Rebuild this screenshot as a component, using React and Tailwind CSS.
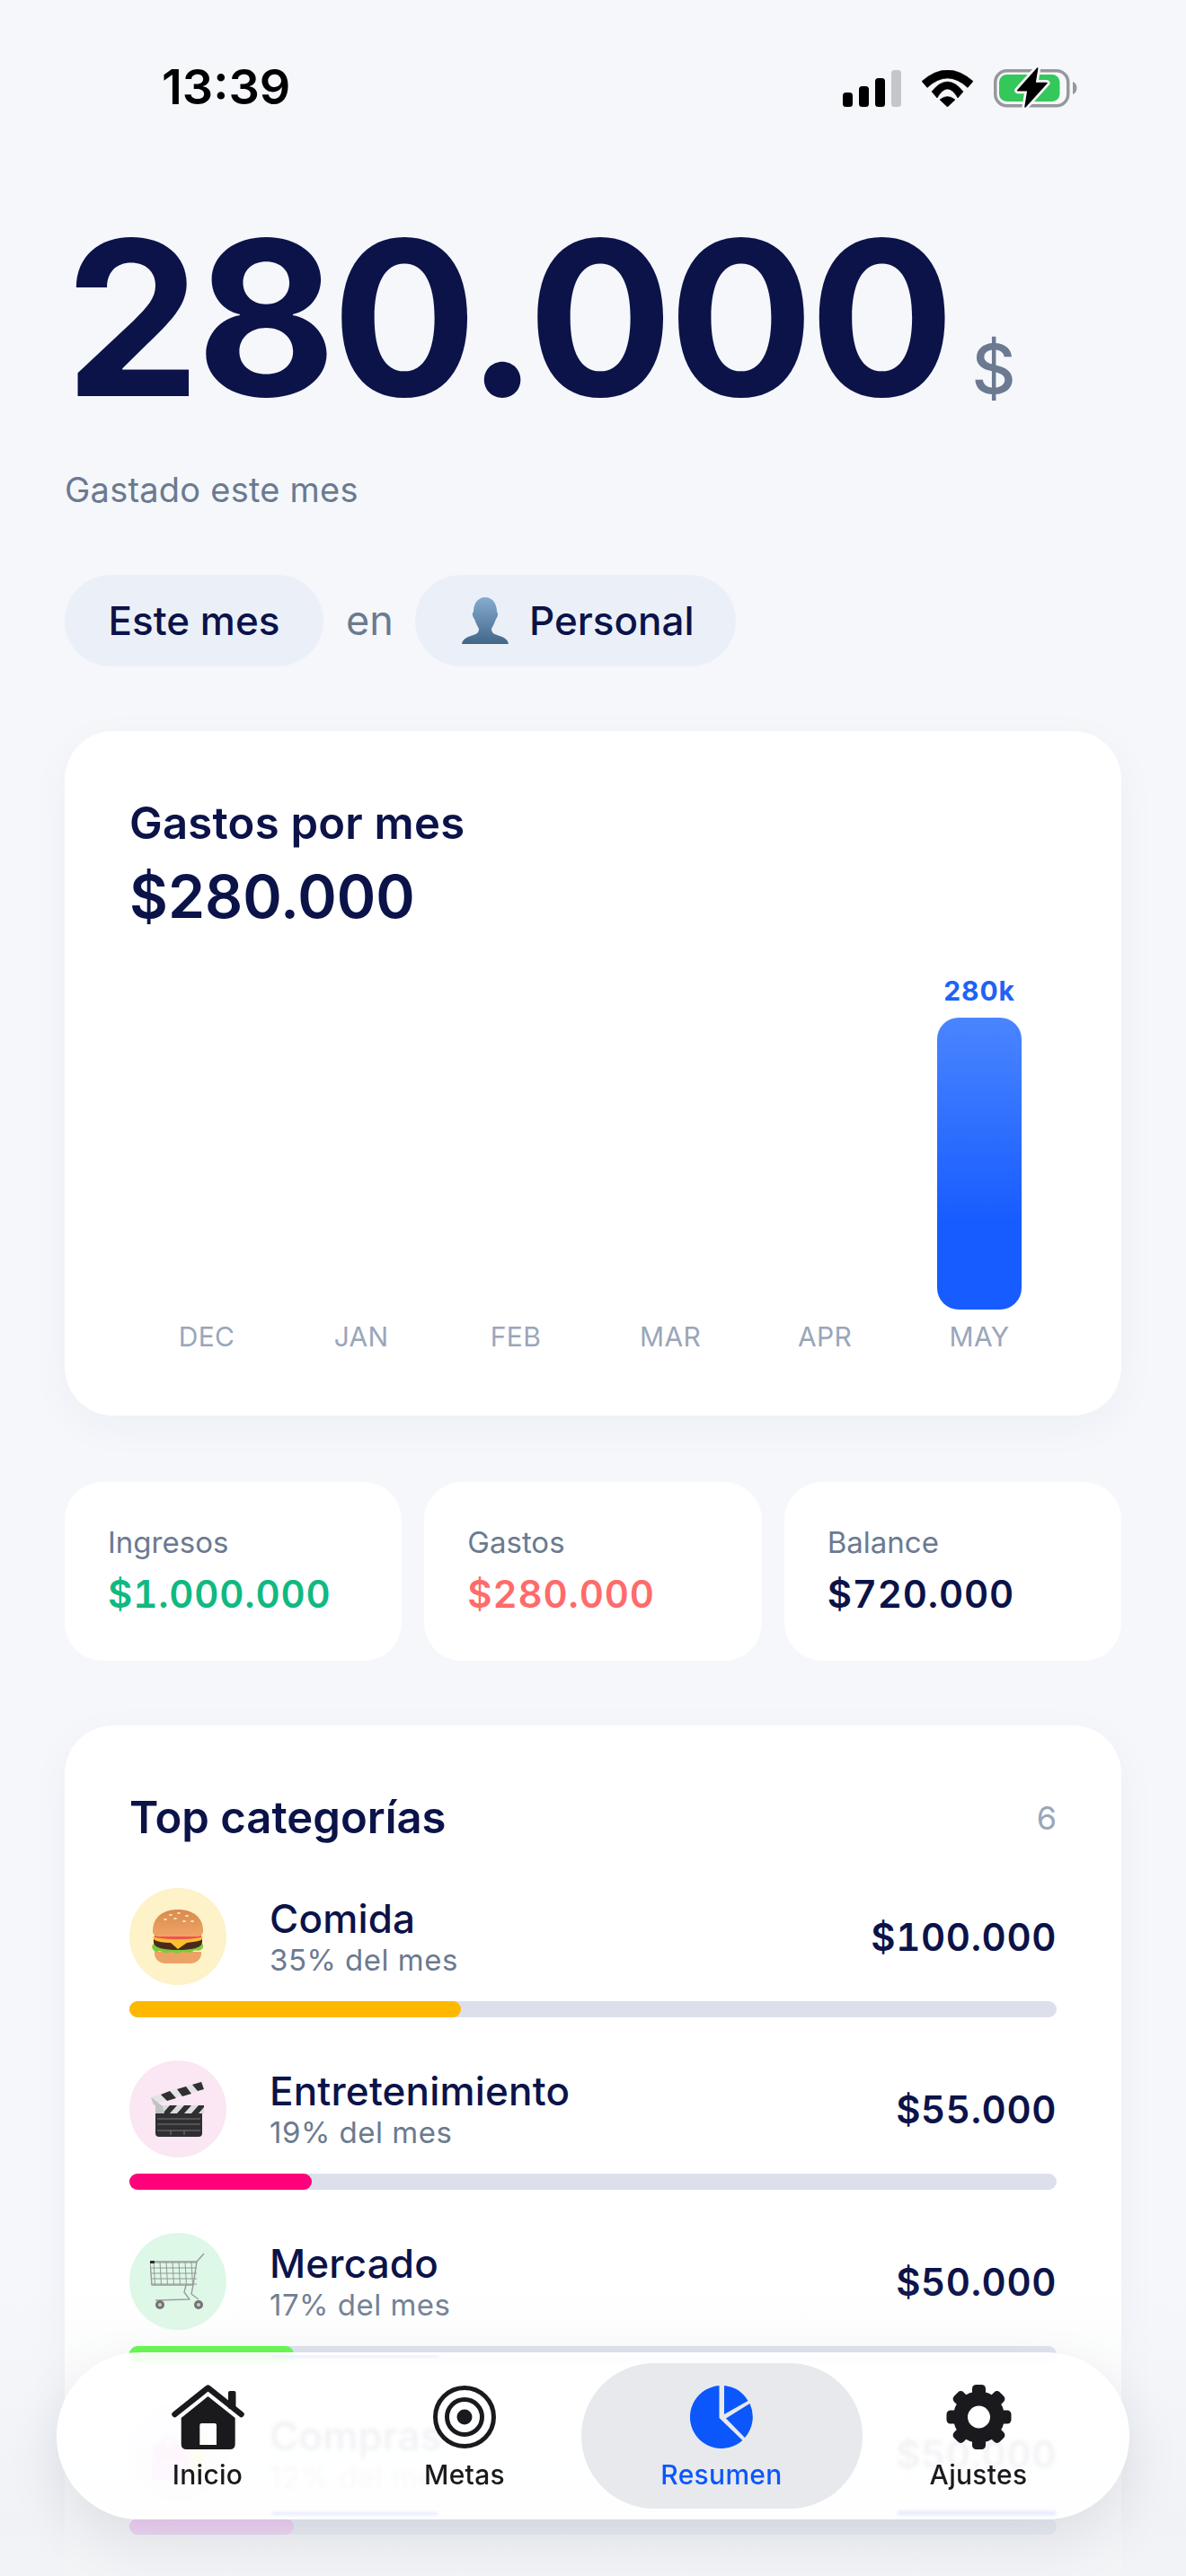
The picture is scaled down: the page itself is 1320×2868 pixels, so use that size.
import React from "react";

const navy = "text-[#0b1349]";

function Signal() {
  return (
    <svg width="65" height="41" viewBox="0 0 65 41">
      <rect x="0" y="25" width="11" height="16" rx="3.5" fill="#000" />
      <rect x="18" y="18" width="11" height="23" rx="3.5" fill="#000" />
      <rect x="36" y="9" width="11" height="32" rx="3.5" fill="#000" />
      <rect x="54" y="0" width="11" height="41" rx="3.5" fill="#c5c6cb" />
    </svg>
  );
}

function Wifi() {
  return (
    <svg width="57" height="41" viewBox="0 0 57 41">
      <path d="M0 12.5 Q28.5 -12.5 57 12.5 L51 19.5 Q28.5 -1.5 6 19.5 Z" fill="#000" stroke="#000" strokeWidth="0.6" strokeLinejoin="round" />
      <path d="M11 24 Q28.5 2 46 24 L40 31 Q28.5 11 17 31 Z" fill="#000" stroke="#000" strokeWidth="0.6" strokeLinejoin="round" />
      <path d="M20 33 Q28.5 26 37 33 L28.5 41 Z" fill="#000" stroke="#000" strokeWidth="0.6" strokeLinejoin="round" />
    </svg>
  );
}

function Battery() {
  const bolt = "M48.7 1 L26.7 25.7 L38 25.7 L35 44 L59 17.5 L46 17.5 Z";
  return (
    <svg width="93" height="46" viewBox="0 0 93 46">
      <rect x="1.75" y="3.75" width="81" height="39" rx="13" fill="none" stroke="#98989c" strokeWidth="3.5" />
      <rect x="6" y="8" width="67.5" height="30" rx="8.5" fill="#34c759" />
      <path d="M88 16 C91 17 92.5 20 92.5 23 C92.5 26 91 29 88 30 Z" fill="#98989c" />
      <path d={bolt} fill="#f5f7fb" stroke="#f5f7fb" strokeWidth="7" strokeLinejoin="round" />
      <path d={bolt} fill="#000" stroke="#000" strokeWidth="1.5" strokeLinejoin="round" />
    </svg>
  );
}

function Bust() {
  return (
    <svg width="52" height="52" viewBox="0 0 52 52">
      <defs>
        <linearGradient id="bust" x1="0" y1="0" x2="0" y2="1">
          <stop offset="0" stopColor="#84add0" />
          <stop offset="1" stopColor="#436688" />
        </linearGradient>
      </defs>
      <path d="M26 0 C35 0 39 8 39 16 C41 18 40 22 38 24 C36 30 34 33 33 35 C33 40 36 41 42 43 C48 45 51 47 52 52 L0 52 C1 47 4 45 10 43 C16 41 19 40 19 35 C18 33 16 30 14 24 C12 22 11 18 13 16 C13 8 17 0 26 0 Z" fill="url(#bust)" />
    </svg>
  );
}

function Burger() {
  return (
    <svg width="60" height="60" viewBox="0 0 60 60">
      <defs>
        <linearGradient id="bun" x1="0" y1="0" x2="0" y2="1">
          <stop offset="0" stopColor="#d98a4e" />
          <stop offset="1" stopColor="#efa566" />
        </linearGradient>
      </defs>
      <path d="M4 47 C3 54 9 60 16 60 L44 60 C51 60 57 54 56 47 Z" fill="#eda265" />
      <path d="M2 39 C10 34 50 34 58 39 L58 42 C54 49 50 43 46 47 C42 50 38 45 33 48 C28 51 24 45 19 48 C14 50 11 44 7 47 C4 48 2 44 1 42 Z" fill="#7ccb3a" />
      <path d="M3 36 C2 28 8 29 30 29 C52 29 58 28 57 36 C57 43 45 45 30 45 C15 45 3 43 3 36 Z" fill="#4b2a1c" />
      <path d="M2 30 L58 30 L56 34 C50 36 44 36 40 37 L30 44 L22 37 C14 37 8 36 4 34 Z" fill="#fbc02d" />
      <path d="M4 28 L56 28 L56 31 C40 34 20 34 4 31 Z" fill="#ef5350" />
      <path d="M2 24 C2 8 14 0 30 0 C46 0 58 8 58 24 C58 29 54 30 50 30 L10 30 C6 30 2 29 2 24 Z" fill="url(#bun)" />
      <g fill="#f8e4c6">
        <ellipse cx="22" cy="6" rx="2" ry="1" />
        <ellipse cx="31" cy="4" rx="2" ry="1" />
        <ellipse cx="40" cy="7" rx="2" ry="1" />
        <ellipse cx="27" cy="10" rx="2" ry="1" />
        <ellipse cx="37" cy="13" rx="2" ry="1" />
        <ellipse cx="16" cy="11" rx="2" ry="1" />
        <ellipse cx="46" cy="13" rx="2" ry="1" />
      </g>
    </svg>
  );
}

function Clapper() {
  return (
    <svg width="62" height="62" viewBox="0 0 62 62">
      <rect x="6" y="27" width="52" height="35" rx="4" fill="#2f2f31" />
      <g stroke="#8c8c8e" strokeWidth="0.8">
        <line x1="8" y1="42" x2="56" y2="42" />
        <line x1="8" y1="48" x2="56" y2="48" />
        <line x1="8" y1="55" x2="56" y2="55" />
        <line x1="23" y1="55" x2="23" y2="60" />
        <line x1="38" y1="55" x2="38" y2="60" />
      </g>
      <rect x="6" y="27" width="54" height="9" fill="#dcdcdc" />
      <path d="M14 36 L22 27 L30 27 L22 36 Z M30 36 L38 27 L46 27 L38 36 Z M46 36 L54 27 L60 27 L60 29 L54 36 Z" fill="#303032" />
      <path d="M1 18 L58 0 L60 9 L4 26 Z" fill="#e3e3e3" />
      <path d="M12 15 L22 11 L29 19 L19 22 Z M30 9 L40 6 L46 14 L36 17 Z M47 4 L57 1 L60 9 L53 11 Z" fill="#303032" />
      <path d="M1 18 L4 26 L6 27 L6 36 L16 36 L14 28 Z" fill="#bfc1c3" />
    </svg>
  );
}

function Cart() {
  const verts = [4, 11, 18, 25, 32, 39, 46];
  const hors = [11, 17, 23, 29, 35];
  return (
    <svg width="62" height="64" viewBox="0 0 62 64" fill="none">
      <g stroke="#8e8e90" strokeWidth="0.9">
        {verts.map((x) => (
          <line key={x} x1={x} y1="10" x2={x + 1.5} y2="36" />
        ))}
        {hors.map((y) => (
          <line key={y} x1="1" y1={y} x2="52" y2={y} />
        ))}
      </g>
      <path d="M0 10 L52 10 L60 1 M52 10 L48 36 L2 36 L0 10 M40 36 L38 44 L44 52 L6 53 M48 36 L46 46 L54 52" stroke="#9a9a9c" strokeWidth="1.4" strokeLinejoin="round" />
      <rect x="0" y="9" width="5" height="3" fill="#2b2b2d" />
      <circle cx="11" cy="58" r="5" fill="#6b6b6d" />
      <circle cx="11" cy="58" r="2" fill="#c9c9cb" />
      <circle cx="54" cy="58" r="5" fill="#6b6b6d" />
      <circle cx="54" cy="58" r="2" fill="#c9c9cb" />
    </svg>
  );
}

function Bags() {
  return (
    <svg width="64" height="64" viewBox="0 0 64 64" fill="none">
      <path d="M38 10 L60 10 L62 58 L38 58 Z" fill="#ffc400" />
      <path d="M4 22 L44 22 L46 62 L2 62 Z" fill="#ff5fd2" />
      <path d="M14 26 C14 8 32 8 32 26" stroke="#c63fa6" strokeWidth="2.5" />
    </svg>
  );
}

function HomeIcon() {
  return (
    <svg width="81" height="72" viewBox="0 0 81 72">
      <path d="M3.5 33 L40.5 3.5 L77.5 33" fill="none" stroke="#1a1a1e" strokeWidth="6.5" strokeLinecap="round" strokeLinejoin="round" />
      <rect x="63" y="7" width="8.5" height="20" rx="2" fill="#1a1a1e" />
      <path
        fillRule="evenodd"
        d="M40.5 13 L70.7 37 L70.7 66 Q70.7 72 64.7 72 L16.7 72 Q10.7 72 10.7 66 L10.7 37 Z M33.3 43 Q31.3 43 31.3 45 L31.3 67 L50 67 L50 45 Q50 43 48 43 Z"
        fill="#1a1a1e"
      />
    </svg>
  );
}

function TargetIcon() {
  return (
    <svg width="70" height="70" viewBox="0 0 70 70" fill="none">
      <circle cx="35" cy="35" r="32.5" stroke="#1a1a1e" strokeWidth="5" />
      <circle cx="35" cy="35" r="19.5" stroke="#1a1a1e" strokeWidth="5" />
      <circle cx="35" cy="35" r="8.5" fill="#1a1a1e" />
    </svg>
  );
}

function PieIcon() {
  return (
    <svg width="70" height="70" viewBox="0 0 70 70" fill="#0b57fb">
      <path d="M32.5 0.1 A35 35 0 1 0 58.4 61 L32.5 36 Z" />
      <path d="M38 0.1 A35 35 0 0 1 64.5 17 L38 32 Z" />
      <path d="M66.5 20 A35 35 0 0 1 61 58 L40 36.5 Z" />
    </svg>
  );
}

function GearIcon() {
  const teeth = [0, 45, 90, 135, 180, 225, 270, 315];
  return (
    <svg width="73" height="72" viewBox="0 0 73 72" fill="#1a1a1e">
      {teeth.map((a) => (
        <rect key={a} x="29" y="0" width="15" height="20" rx="4.5" transform={`rotate(${a} 36.5 36)`} />
      ))}
      <circle cx="36.5" cy="36" r="20.5" fill="none" stroke="#1a1a1e" strokeWidth="16" />
    </svg>
  );
}

const months = ["DEC", "JAN", "FEB", "MAR", "APR"];

const rows = [
  { name: "Comida", sub: "35% del mes", amount: "$100.000", circle: "bg-[#fdf2c8]", bar: "bg-[#ffb800]", w: "w-[369px]", icon: <Burger /> },
  { name: "Entretenimiento", sub: "19% del mes", amount: "$55.000", circle: "bg-[#fbe6f3]", bar: "bg-[#ff007a]", w: "w-[203px]", icon: <Clapper /> },
  { name: "Mercado", sub: "17% del mes", amount: "$50.000", circle: "bg-[#ddf8e6]", bar: "bg-[#48fb2b]", w: "w-[183px]", icon: <Cart /> },
  { name: "Compras", sub: "12% del mes", amount: "$50.000", circle: "bg-[#fbe0fa]", bar: "bg-[#ee8cf0]", w: "w-[183px]", icon: <Bags /> },
];

function Mini({ label, value, color }) {
  return (
    <div className="h-[199px] rounded-[42px] bg-white pl-[48px] pt-[47px]">
      <div className="text-[33px] leading-[40px] text-[#6b7a90]">{label}</div>
      <div className={`mt-[12px] text-[42px] leading-[52px] font-semibold tabular-nums tracking-[0.02em] ${color}`}>{value}</div>
    </div>
  );
}

function NavItem({ icon, label, active }) {
  return (
    <div className="relative flex h-[162px] flex-col items-center pt-[24px]">
      {active && <div className="absolute -inset-x-[13.5px] inset-y-0 rounded-full bg-[#e7e9ed]" />}
      <div className="relative flex h-[72px] items-center justify-center">{icon}</div>
      <div className={`relative mt-[8px] text-[30px] leading-[40px] font-medium tracking-[0.01em] ${active ? "text-[#0b57fb]" : "text-[#1a1a1e]"}`}>{label}</div>
    </div>
  );
}

export default function App() {
  return (
    <div className="relative h-[2868px] w-[1320px] overflow-hidden bg-[#f5f7fb] [font-family:Inter,sans-serif]">
      {/* status bar */}
      <div className="flex h-[234px] items-start justify-between pl-[180px] pr-[121px] pt-[75px]">
        <div className="text-[54px] leading-[44px] font-semibold text-black">13:39</div>
        <div className="flex items-center gap-[23px]">
          <Signal />
          <Wifi />
          <Battery />
        </div>
      </div>

      <div className="px-[72px]">
        {/* hero */}
        <div className={`flex h-[240px] items-baseline leading-[240px] ${navy}`}>
          <span className="text-[240px] font-bold tracking-[-0.021em]">280.000</span>
          <span className="ml-[24px] -translate-y-[3px] text-[76px] font-medium text-[#6b7a90]">$</span>
        </div>
        <div className="mt-[49px] text-[38px] leading-[44px] tracking-[0.006em] text-[#6b7a90]">Gastado este mes</div>

        {/* chips */}
        <div className="mt-[73px] flex items-center">
          <div className={`flex h-[102px] w-[288px] items-center justify-center rounded-full bg-[#ebf0f8] text-[44px] font-medium ${navy}`}>Este mes</div>
          <div className="ml-[25px] w-[52px] text-[45px] text-[#6b7a90]">en</div>
          <div className={`ml-[25px] flex h-[102px] w-[357px] items-center gap-[23px] rounded-full bg-[#ebf0f8] pl-[52px] text-[44px] font-medium ${navy}`}>
            <Bust />
            <span>Personal</span>
          </div>
        </div>

        {/* chart card */}
        <div className="mt-[72px] h-[762px] rounded-[54px] bg-white px-[72px] pt-[73px] shadow-[0_12px_48px_rgba(30,50,110,0.04)]">
          <div className={`text-[49px] leading-[60px] font-semibold tracking-[0.005em] ${navy}`}>Gastos por mes</div>
          <div className={`mt-[11px] text-[66px] leading-[80px] font-semibold ${navy}`}>$280.000</div>
          <div className="mt-[47px] grid h-[421px] grid-cols-6 items-end">
            {months.map((m) => (
              <div key={m} className="text-center text-[30px] leading-[36px] tracking-[0.01em] text-[#9aa6ba]">{m}</div>
            ))}
            <div className="flex flex-col items-center">
              <div className="text-[30px] leading-[36px] font-bold tracking-[0.03em] text-[#1f63f5]">280k</div>
              <div className="mt-[12px] h-[325px] w-[94px] rounded-[24px] bg-[linear-gradient(to_bottom,#4a85ff_0%,#175cff_70%)]" />
              <div className="mt-[12px] text-[30px] leading-[36px] tracking-[0.01em] text-[#9aa6ba]">MAY</div>
            </div>
          </div>
        </div>

        {/* mini cards */}
        <div className="mt-[74px] grid grid-cols-3 gap-x-[25px]">
          <Mini label="Ingresos" value="$1.000.000" color="text-[#10b981]" />
          <Mini label="Gastos" value="$280.000" color="text-[#ff6b6b]" />
          <Mini label="Balance" value="$720.000" color={navy} />
        </div>

        {/* categories */}
        <div className="mt-[72px] rounded-[54px] bg-white px-[72px] pb-[96px] pt-[73px] shadow-[0_12px_48px_rgba(30,50,110,0.04)]">
          <div className="flex items-center justify-between">
            <div className={`text-[49px] leading-[60px] font-semibold ${navy}`}>Top categorías</div>
            <div className="text-[36px] text-[#9aa6ba]">6</div>
          </div>
          <div className="mt-[48px] flex flex-col gap-[48px]">
            {rows.map((r) => (
              <div key={r.name}>
                <div className="flex h-[108px]">
                  <div className={`flex h-[108px] w-[108px] items-center justify-center rounded-full ${r.circle}`}>{r.icon}</div>
                  <div className="ml-[48px] pt-[7px]">
                    <div className={`text-[44px] leading-[54px] font-medium tracking-[0.004em] ${navy}`}>{r.name}</div>
                    <div className="text-[33px] leading-[39px] tracking-[0.015em] text-[#6b7a90]">{r.sub}</div>
                  </div>
                  <div className={`ml-auto mt-[25px] text-[42px] leading-[60px] font-semibold tabular-nums tracking-[0.015em] ${navy}`}>{r.amount}</div>
                </div>
                <div className="mt-[18px] h-[18px] rounded-[9px] bg-[#dbe0ec]">
                  <div className={`h-[18px] rounded-[9px] ${r.bar} ${r.w}`} />
                </div>
              </div>
            ))}
          </div>
        </div>
      </div>

      {/* bottom fade */}
      <div className="pointer-events-none absolute inset-x-0 bottom-0 h-[328px] bg-[linear-gradient(to_bottom,rgba(238,240,243,0)_0%,rgba(238,240,243,0.68)_82%,rgba(241,243,246,0.92)_100%)]" />

      {/* glass tab bar */}
      <div className="absolute left-[63px] top-[2619px] h-[186px] w-[1194px] overflow-hidden rounded-full border-[3px] border-white/90 bg-white/90 shadow-[0_24px_60px_rgba(30,40,70,0.10)] backdrop-blur-[2px]">
        {/* refraction streaks along the glass edge */}
        <div className="absolute left-[236px] top-[0px] h-[3px] w-[186px] rounded-full bg-[#eef1ff] blur-[1px]" />
        <div className="absolute bottom-[1px] left-[236px] h-[5px] w-[186px] rounded-full bg-[#eef0ff] blur-[1.5px]" />
        <div className="absolute bottom-[1px] right-[78px] h-[6px] w-[178px] rounded-full bg-[#ebeefd] blur-[1.5px]" />
        <div className="grid grid-cols-4 px-[22px] pt-[9px]">
          <NavItem icon={<HomeIcon />} label="Inicio" />
          <NavItem icon={<TargetIcon />} label="Metas" />
          <NavItem icon={<PieIcon />} label="Resumen" active />
          <NavItem icon={<GearIcon />} label="Ajustes" />
        </div>
      </div>
    </div>
  );
}
